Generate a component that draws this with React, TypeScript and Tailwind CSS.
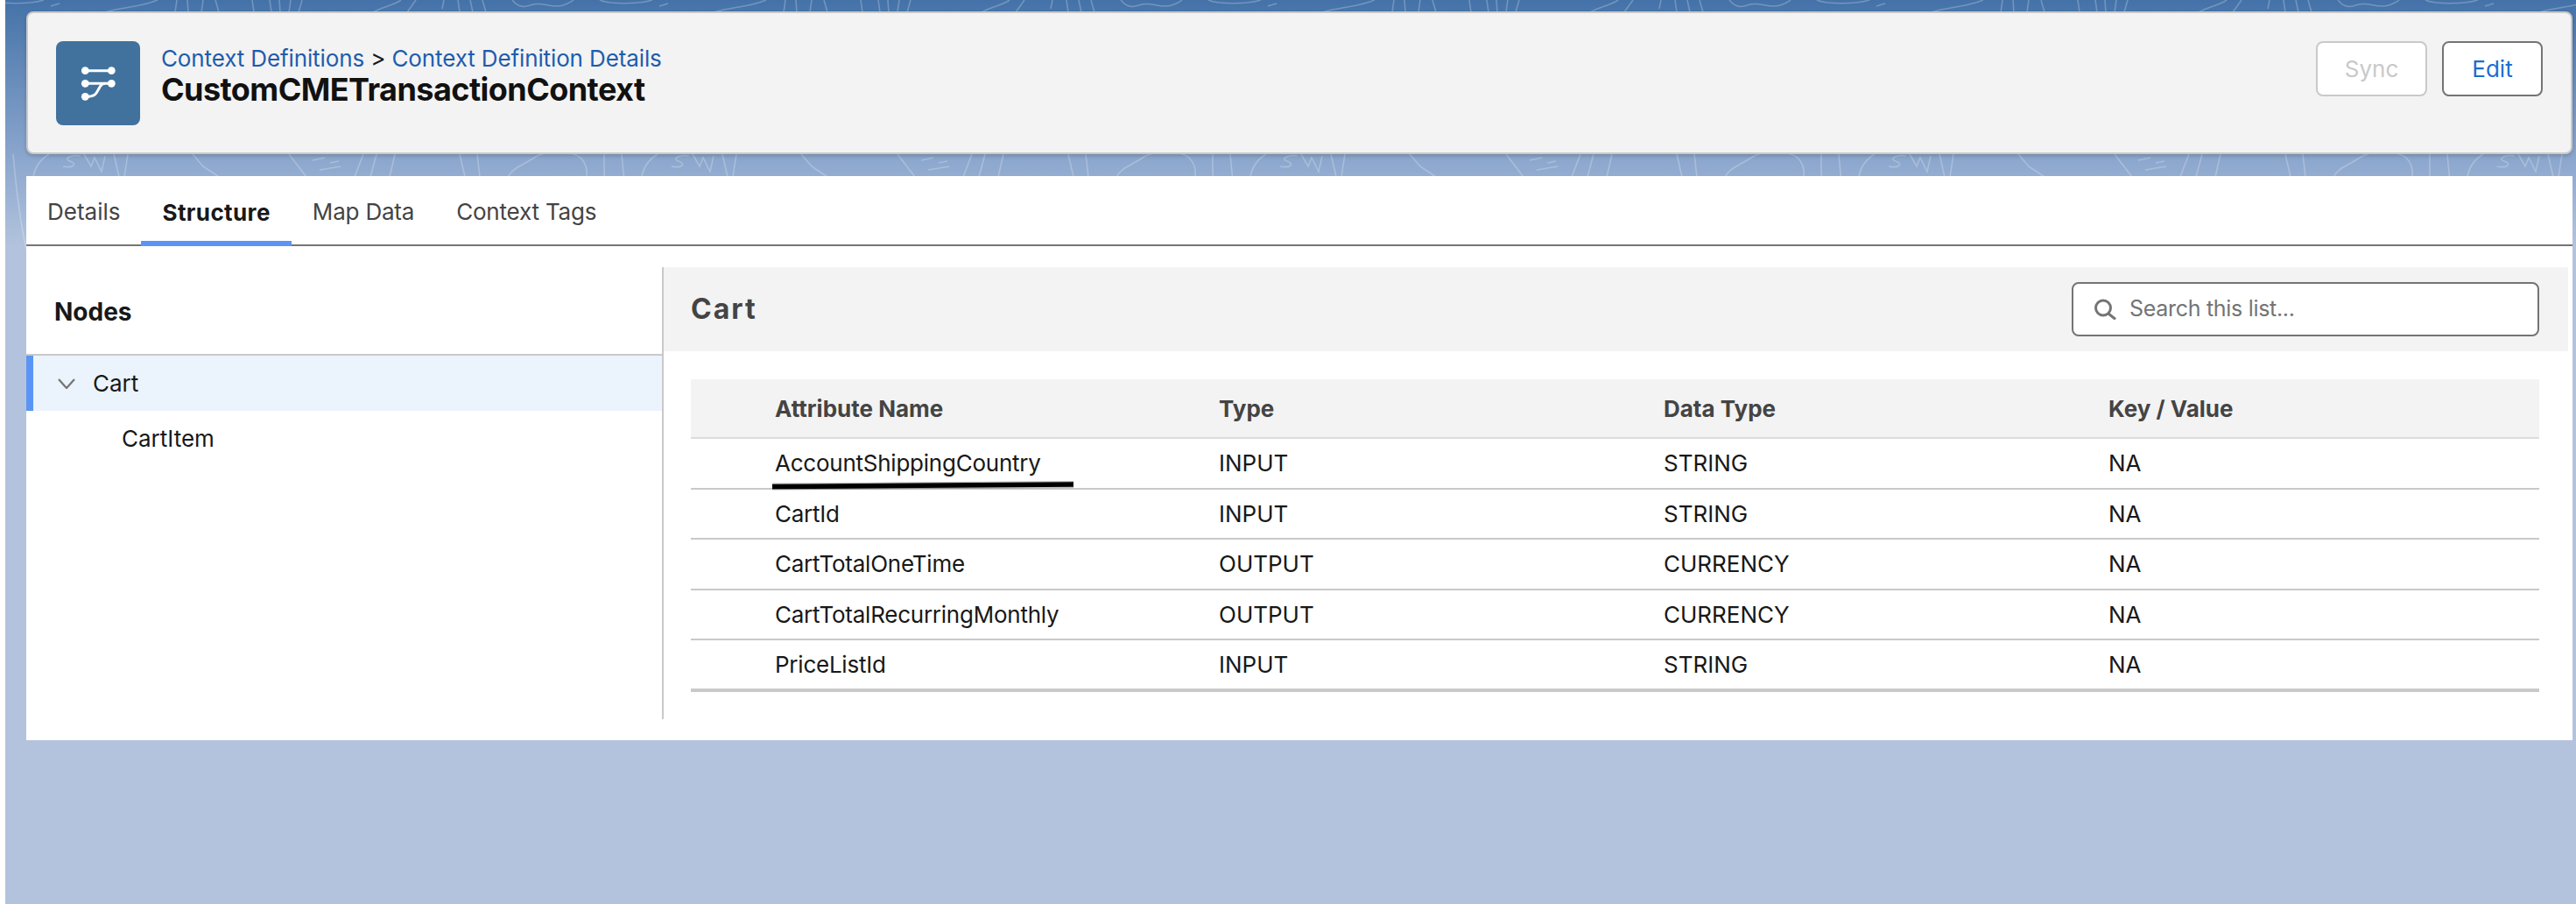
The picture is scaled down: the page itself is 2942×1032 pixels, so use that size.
const attributes = [
  { name: 'AccountShippingCountry', type: 'INPUT', dataType: 'STRING', keyValue: 'NA' },
  { name: 'CartId', type: 'INPUT', dataType: 'STRING', keyValue: 'NA' },
  { name: 'CartTotalOneTime', type: 'OUTPUT', dataType: 'CURRENCY', keyValue: 'NA' },
  { name: 'CartTotalRecurringMonthly', type: 'OUTPUT', dataType: 'CURRENCY', keyValue: 'NA' },
  { name: 'PriceListId', type: 'INPUT', dataType: 'STRING', keyValue: 'NA' },
];

const tabs = [
  { label: 'Details', className: 'h-[78px] px-6 pt-[3px] flex items-center text-[#444]' },
  { label: 'Structure', className: 'h-20 px-6 flex items-center font-bold text-[#181818] border-b-[6px] border-[#5a95f5] pt-[8px] tracking-[0.4px]' },
  { label: 'Map Data', className: 'h-[78px] px-6 pt-[3px] flex items-center text-[#444] tracking-[-0.2px]' },
  { label: 'Context Tags', className: 'h-[78px] px-6 pt-[3px] flex items-center text-[#444] tracking-[-0.2px]' },
];

// contour lines of the header texture, one period of the repeat
const contours = [
  'M5 14L3 0M15 14L14 0M25 14L27 0M36 14L40 0',
  'M121 14C130 8 145 6 153 0M160 14L170 0M200 10L202 0M220 14L218 0M235 14L232 0M250 14L246 0',
  'M280 0C288 10 296 8 304 5C316 2 325 10 338 6C344 4 348 2 350 0',
  'M380 0C390 5 425 5 440 0M448 7L458 4M510 14C530 8 552 8 570 0',
  'M590 14L592 0M605 14L604 0M620 14L622 0M640 14L636 0M680 14L678 0',
  'M25 176L45 202M52 183L66 180M60 194L84 190M72 186L82 184',
  'M100 202L110 176M118 202L125 176M140 202L146 176',
  'M220 176L226 202M240 176L243 202',
  'M275 202C280 192 290 190 305 180C318 172 345 170 358 180C364 186 366 194 365 202',
  'M385 176C384 210 388 240 392 284M405 176C408 210 412 250 420 284',
  'M428 202C430 190 436 182 446 176M462 190C472 192 480 188 470 184C462 182 470 176 482 178',
  'M486 176L494 190L498 180L506 196L510 178M520 176L526 202M536 176L532 202',
  'M610 176L622 190L640 202',
];

function FlowIcon() {
  return (
    <svg viewBox="0 0 96 96" className="w-24 h-24" fill="none" stroke="white" strokeWidth="3">
      <path d="M33.3 33.7H63.3M33.3 48.3H63.3" />
      <path d="M33.3 63.3C45 63.3 46 60 49 54C51 50 53 48.3 56 48.3" />
      <g fill="white" stroke="none">
        <circle cx="33.3" cy="33.7" r="4.4" />
        <circle cx="63.3" cy="33.7" r="4.4" />
        <circle cx="33.3" cy="48.3" r="4.4" />
        <circle cx="63.3" cy="48.3" r="4.4" />
        <circle cx="33.3" cy="63.3" r="4.4" />
      </g>
    </svg>
  );
}

function SearchIcon() {
  return (
    <svg viewBox="0 0 26 24" className="w-[26px] h-6 shrink-0" fill="none" stroke="#747474" strokeWidth="3">
      <circle cx="11" cy="10.5" r="8.5" />
      <path d="M17 17L25 23.5" />
    </svg>
  );
}

function ChevronDown() {
  return (
    <svg viewBox="0 0 20 12" className="w-5 h-3" fill="none" stroke="#747474" strokeWidth="2.2">
      <path d="M1 1L10 11L19 1" />
    </svg>
  );
}

export default function App() {
  return (
    <div className="relative w-full h-[1032px] bg-white pl-[6px] font-['Inter',sans-serif] text-[26px] text-[#181818] overflow-hidden">
      <div className="relative h-full pt-[13px] pl-6 pr-1 bg-[linear-gradient(180deg,#4472a8_0px,#8fa9cf_190px,#b3c3dd_282px)]">
        <svg className="absolute left-0 top-0 w-full h-[290px]" fill="none">
          <defs>
            <pattern id="contours" width="695" height="290" patternUnits="userSpaceOnUse" patternTransform="translate(299 0)">
              {contours.map((d) => (
                <path key={d} d={d} stroke="white" strokeOpacity="0.24" strokeWidth="1.6" />
              ))}
            </pattern>
          </defs>
          <rect width="100%" height="100%" fill="url(#contours)" />
        </svg>

        <header className="relative h-[163px] rounded-lg border-2 border-[#c9c9c9] bg-[#f3f3f3] pl-8 pr-8 pt-8 shadow-[0_2px_4px_rgba(0,0,0,0.18)] flex items-start">
          <div className="w-24 h-24 rounded-lg bg-[#41729d] shrink-0">
            <FlowIcon />
          </div>
          <div className="ml-6 flex-1">
            <div className="mt-[2px] h-9 leading-9 tracking-[-0.12px]">
              <a className="text-[#1f5cad]">Context Definitions</a>
              <span> &gt; </span>
              <a className="text-[#1f5cad]">Context Definition Details</a>
            </div>
            <h1 className="text-[36px] leading-[34px] font-bold text-[#111] tracking-[-0.55px]">CustomCMETransactionContext</h1>
          </div>
          <div className="flex gap-[17px]">
            <button className="w-[127px] h-[63px] rounded-lg border-2 border-[#c9c9c9] bg-white text-[#c9c9c9]">Sync</button>
            <button className="w-[115px] h-[63px] rounded-lg border-2 border-[#747474] bg-white text-[#1b6dd0]">Edit</button>
          </div>
        </header>

        <main className="relative mt-[25px] h-[644px] bg-white">
          <nav className="h-20 flex border-b-2 border-[#747474]">
            {tabs.map((tab) => (
              <div key={tab.label} className={tab.className}>
                {tab.label}
              </div>
            ))}
          </nav>

          <div className="flex pt-6 h-[540px]">
            <aside className="w-[728px] shrink-0 border-r-2 border-[#c9c9c9]">
              <div className="h-[101px] pl-8 pt-[2px] flex items-center text-[28px] font-bold text-[#181818] border-b-2 border-[#c9c9c9]">Nodes</div>
              <div className="h-[63px] flex items-center bg-[#ebf3fd] border-l-8 border-[#5a95f5] pl-7 gap-5">
                <ChevronDown />
                <span>Cart</span>
              </div>
              <div className="h-[63px] flex items-center pl-[109px]">CartItem</div>
            </aside>

            <section className="flex-1 pr-[5px]">
              <div className="h-24 flex items-center justify-between bg-[#f3f3f3] pl-[31px] pr-[33px]">
                <h2 className="text-[32px] font-bold text-[#444] tracking-[2px]">Cart</h2>
                <div className="w-[534px] h-[62px] rounded-lg border-2 border-[#747474] bg-white flex items-center pl-[23px] gap-[15px] text-[25px] tracking-[-0.3px] text-[#747474]">
                  <SearchIcon />
                  <span>Search this list...</span>
                </div>
              </div>

              <div className="mt-8 ml-[31px] mr-[33px]">
                <div className="h-[68px] grid grid-cols-[507px_508px_508px_1fr] items-center pl-[96px] bg-[#f3f3f3] border-b-2 border-[#dcdcdc] font-bold text-[#444]">
                  <span>Attribute Name</span>
                  <span>Type</span>
                  <span>Data Type</span>
                  <span>Key / Value</span>
                </div>
                {attributes.map((row, i) => (
                  <div
                    key={row.name}
                    className={
                      i === attributes.length - 1
                        ? 'h-[58.5px] grid grid-cols-[507px_508px_508px_1fr] items-center pl-[96px] border-b-4 border-[#c9c9c9]'
                        : 'h-[57.5px] grid grid-cols-[507px_508px_508px_1fr] items-center pl-[96px] border-b-2 border-[#c9c9c9]'
                    }
                  >
                    <span className="tracking-[-0.24px]">{row.name}</span>
                    <span>{row.type}</span>
                    <span>{row.dataType}</span>
                    <span>{row.keyValue}</span>
                  </div>
                ))}
              </div>
            </section>
          </div>
        </main>
      </div>

      {/* hand drawn marker under the first attribute */}
      <svg className="absolute left-[880px] top-[546px] w-[350px] h-4" viewBox="0 0 350 16" fill="none">
        <path d="M2 9.5C120 9 240 8 346 7" stroke="black" strokeOpacity="0.25" strokeWidth="8" />
        <path d="M2 9.5C120 9 240 8 346 7" stroke="black" strokeWidth="5.5" />
      </svg>
    </div>
  );
}
